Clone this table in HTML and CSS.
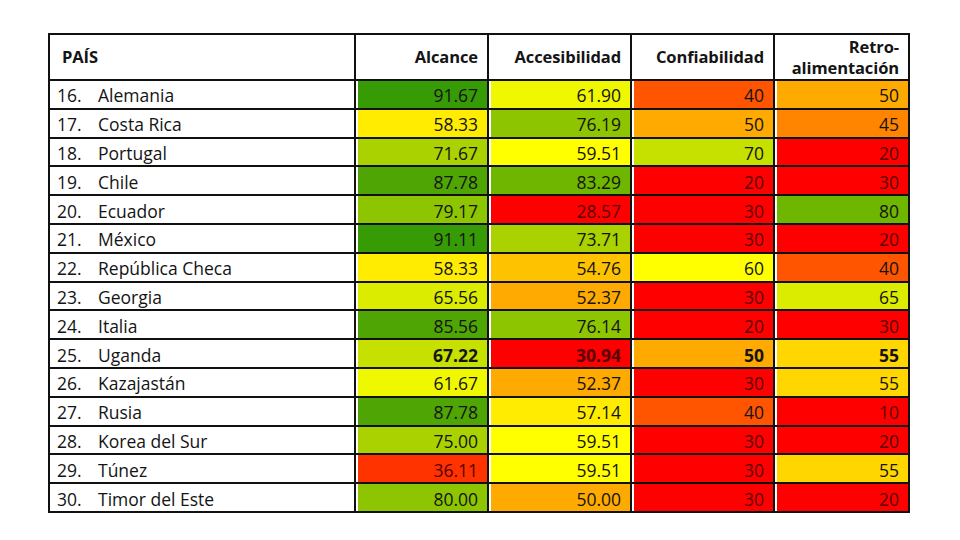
FILE: index.html
```html
<!DOCTYPE html>
<html lang="es">
<head>
<meta charset="utf-8">
<link rel="stylesheet" href="styles.css">
</head>
<body>
<table class="ranking">
  <colgroup>
    <col class="c-pais"><col class="c-alc"><col class="c-acc"><col class="c-con"><col class="c-ret">
  </colgroup>
  <thead>
    <tr>
      <th class="h-pais">PAÍS</th>
      <th>Alcance</th>
      <th>Accesibilidad</th>
      <th>Confiabilidad</th>
      <th class="h-retro">Retro-<br>alimentación</th>
    </tr>
  </thead>
  <tbody>
    <tr><td class="pais"><span class="n">16.</span>Alemania</td><td class="g1">91.67</td><td class="y2">61.90</td><td class="o1">40</td><td class="o3">50</td></tr>
    <tr><td class="pais"><span class="n">17.</span>Costa Rica</td><td class="y1">58.33</td><td class="g4">76.19</td><td class="o3">50</td><td class="o2">45</td></tr>
    <tr><td class="pais"><span class="n">18.</span>Portugal</td><td class="g5">71.67</td><td class="y0">59.51</td><td class="g6">70</td><td class="r">20</td></tr>
    <tr><td class="pais"><span class="n">19.</span>Chile</td><td class="g2">87.78</td><td class="g3">83.29</td><td class="r">20</td><td class="r">30</td></tr>
    <tr><td class="pais"><span class="n">20.</span>Ecuador</td><td class="g4">79.17</td><td class="r">28.57</td><td class="r">30</td><td class="g3">80</td></tr>
    <tr><td class="pais"><span class="n">21.</span>México</td><td class="g1">91.11</td><td class="g5">73.71</td><td class="r">30</td><td class="r">20</td></tr>
    <tr><td class="pais"><span class="n">22.</span>República Checa</td><td class="y1">58.33</td><td class="o4">54.76</td><td class="y0">60</td><td class="o1">40</td></tr>
    <tr><td class="pais"><span class="n">23.</span>Georgia</td><td class="y3">65.56</td><td class="o3">52.37</td><td class="r">30</td><td class="y3">65</td></tr>
    <tr><td class="pais"><span class="n">24.</span>Italia</td><td class="g2">85.56</td><td class="g4">76.14</td><td class="r">20</td><td class="r">30</td></tr>
    <tr class="bold"><td class="pais"><span class="n">25.</span>Uganda</td><td class="g6">67.22</td><td class="r">30.94</td><td class="o3">50</td><td class="o5">55</td></tr>
    <tr><td class="pais"><span class="n">26.</span>Kazajastán</td><td class="y2">61.67</td><td class="o3">52.37</td><td class="r">30</td><td class="o5">55</td></tr>
    <tr><td class="pais"><span class="n">27.</span>Rusia</td><td class="g2">87.78</td><td class="y1">57.14</td><td class="o1">40</td><td class="r">10</td></tr>
    <tr><td class="pais"><span class="n">28.</span>Korea del Sur</td><td class="g5">75.00</td><td class="y0">59.51</td><td class="r">30</td><td class="r">20</td></tr>
    <tr><td class="pais"><span class="n">29.</span>Túnez</td><td class="r2">36.11</td><td class="y0">59.51</td><td class="r">30</td><td class="o5">55</td></tr>
    <tr><td class="pais"><span class="n">30.</span>Timor del Este</td><td class="g4">80.00</td><td class="o3">50.00</td><td class="r">30</td><td class="r">20</td></tr>
  </tbody>
</table>
</body>
</html>
```

FILE: styles.css
```css
html, body {
  margin: 0;
  padding: 0;
  background: #ffffff;
}

body {
  padding: 33px 0 0 48px;
  font-family: "Open Sans", "Liberation Sans", sans-serif;
  color: #141414;
}

.ranking {
  border-collapse: collapse;
  border: 2px solid #111;
  table-layout: fixed;
  width: 860px;
}

.c-pais { width: 306px; }
.c-alc { width: 133px; }
.c-acc { width: 143px; }
.c-con { width: 143px; }
.c-ret { width: 135px; }

.ranking th,
.ranking td {
  border: 2px solid #111;
  padding: 0 9px 0 6px;
  text-align: right;
  box-shadow: inset 2px 0 0 #fff;
}

.ranking th {
  height: 43px;
  padding-bottom: 1px;
  font-size: 16.5px;
  font-weight: 700;
  line-height: 21px;
  background: #fff;
  box-shadow: none;
  letter-spacing: -0.1px;
}

.ranking th.h-pais {
  text-align: left;
  padding-left: 12px;
}

.ranking th.h-retro {
  line-height: 21px;
}

.ranking td {
  height: 24.8px;
  font-size: 17.5px;
  font-weight: 500;
  line-height: 20px;
  padding-top: 2px;
}

.ranking td.pais {
  text-align: left;
  padding-left: 7px;
  background: #fff;
  box-shadow: none;
}

.n {
  display: inline-block;
  width: 41px;
}

.bold td { font-weight: 700; }
.bold td.pais { font-weight: 500; }

/* colour scale */
.g1 { background: #379b06; }
.g2 { background: #4ea503; }
.g3 { background: #6fb600; }
.g4 { background: #8dc500; }
.g5 { background: #a9d200; }
.g6 { background: #c6e100; }
.y3 { background: #dcec00; }
.y2 { background: #f0f800; }
.y0 { background: #ffff00; }
.y1 { background: #ffec00; }
.o5 { background: #ffd600; }
.o4 { background: #ffc200; }
.o3 { background: #ffaa00; }
.o2 { background: #ff8400; }
.o1 { background: #ff5500; }
.r2 { background: #ff3300; color: #5a0000; }
.r { background: #ff0000; color: #5a0000; }
```
